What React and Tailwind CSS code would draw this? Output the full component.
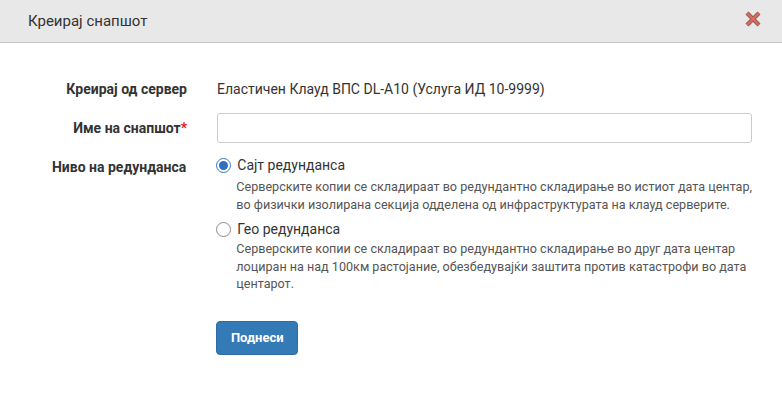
export default function App() {
  const font = { fontFamily: "Roboto, 'Noto Sans', sans-serif" };
  return (
    <div className="w-[782px] h-[397px] bg-white text-[#333]" style={font}>
      <div className="h-[43px] bg-[#e8e8e8] border-b border-[#c4c4c4] flex items-center justify-between pl-[28px] pr-[20px]">
        <span className="text-[15px] text-[#333]">Креирај снапшот</span>
        <svg width="18" height="18" viewBox="0 0 18 18" className="mt-[-4px]">
          <g strokeLinecap="butt">
            <path d="M3 3 L15 15 M15 3 L3 15" stroke="#8a5a58" strokeWidth="4.2" />
            <path d="M3 3 L15 15 M15 3 L3 15" stroke="#e06a5e" strokeWidth="2.4" />
          </g>
        </svg>
      </div>
      <div className="pt-[36px] pr-[30px]">
        <div className="flex items-center h-[20px]">
          <div className="w-[187px] text-right pr-0 text-[14px] font-bold">Креирај од сервер</div>
          <div className="ml-[30px] text-[14px] text-[#333]">Еластичен Клауд ВПС DL-A10 (Услуга ИД 10-9999)</div>
        </div>
        <div className="flex items-center mt-[14px]">
          <div className="w-[187px] text-right text-[14px] font-bold">
            Име на снапшот<span className="text-[#e02020]">*</span>
          </div>
          <div className="ml-[30px] flex-1">
            <input className="w-full h-[30px] border border-[#cccccc] rounded-[3px] px-2 text-[14px] outline-none" />
          </div>
        </div>
        <div className="flex mt-[11px]">
          <div className="w-[187px] text-right text-[14px] font-bold pt-[3px]">Ниво на редунданса</div>
          <div className="ml-[30px] flex-1">
            <div className="flex items-center h-[22px]">
              <span className="w-[15px] h-[15px] rounded-full border border-[#3a78c2] flex items-center justify-center bg-white">
                <span className="w-[9px] h-[9px] rounded-full bg-[#2f6fbf]" />
              </span>
              <span className="ml-[6px] text-[14px]">Сајт редунданса</span>
            </div>
            <div className="text-[12.6px] leading-[17.5px] text-[#555] ml-[20px] mt-[2px] whitespace-nowrap">
              Серверските копии се складираат во редундантно складирање во истиот дата центар,<br />
              во физички изолирана секција одделена од инфраструктурата на клауд серверите.
            </div>
            <div className="flex items-center h-[22px] mt-[5px]">
              <span className="w-[15px] h-[15px] rounded-full border border-[#8a8a8a] bg-white" />
              <span className="ml-[6px] text-[14px]">Гео редунданса</span>
            </div>
            <div className="text-[12.6px] leading-[17.5px] text-[#555] ml-[20px] whitespace-nowrap">
              Серверските копии се складираат во редундантно складирање во друг дата центар<br />
              лоциран на над 100км растојание, обезбедувајќи заштита против катастрофи во дата<br />
              центарот.
            </div>
            <button className="mt-[28px] w-[82px] h-[34px] bg-[#337ab7] border border-[#2e6da4] rounded-[4px] text-white text-[13px] font-bold">
              Поднеси
            </button>
          </div>
        </div>
      </div>
    </div>
  );
}
